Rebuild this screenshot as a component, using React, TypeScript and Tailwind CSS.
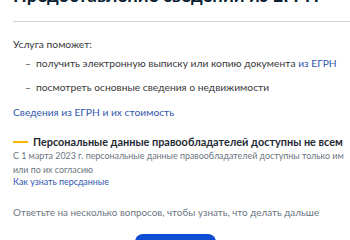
export default function App() {
  return (
    <div className="w-[350px] h-[240px] overflow-hidden bg-white text-[#383838]" style={{ fontFamily: "Lato, 'Noto Sans', sans-serif" }}>
      <div className="pl-[13px]">
        <h1 className="mt-[-16px] mb-[15px] text-[18.5px] leading-[22px] font-bold text-[#0b1f33] whitespace-nowrap">Предоставление сведений из ЕГРН</h1>
        <div className="h-px bg-[#cfd4d9]" />
        <div className="mt-[15px] text-[10.25px] leading-[14px]">Услуга поможет:</div>
        <ul className="mt-[5px] flex flex-col gap-[10px] text-[10.25px] leading-[14px]">
          <li className="flex">
            <span className="w-[23px] pl-[12px]">–</span>
            <span>получить электронную выписку или копию документа <span className="text-[#2f56b0]">из ЕГРН</span></span>
          </li>
          <li className="flex">
            <span className="w-[23px] pl-[12px]">–</span>
            <span>посмотреть основные сведения о недвижимости</span>
          </li>
        </ul>
        <div className="mt-[11px] text-[10.25px] leading-[14px] text-[#2f56b0]">Сведения из ЕГРН и их стоимость</div>
        <div className="mt-[16px] flex items-center gap-[5px]">
          <div className="w-[15px] h-[2px] bg-[#f5b800]" />
          <div className="text-[10.9px] leading-[14px] font-bold text-[#1f2a35]">Персональные данные правообладателей доступны не всем</div>
        </div>
        <div className="text-[8.9px] leading-[14px] text-[#6b7580]">С 1 марта 2023 г. персональные данные правообладателей доступны только им<br />или по их согласию</div>
        <div className="mt-[-2px] text-[8.9px] leading-[13px] text-[#2f56b0]">Как узнать персданные</div>
        <div className="mt-[17px] text-[9.9px] leading-[14px] text-[#6b7580]">Ответьте на несколько вопросов, чтобы узнать, что делать дальше</div>
        <div className="mt-[15px] flex justify-center pr-[13px]">
          <button className="w-[81px] h-[28px] rounded-[8px] bg-[#0d4cd3]" />
        </div>
      </div>
    </div>
  );
}
